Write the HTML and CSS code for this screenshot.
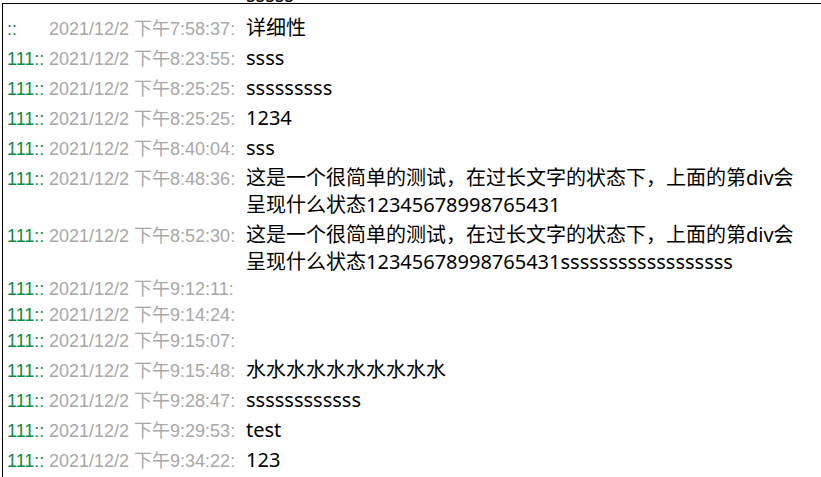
FILE: index.html
```html
<!DOCTYPE html>
<html>
<head>
<meta charset="utf-8">
<link rel="stylesheet" href="styles.css">
</head>
<body>
<div class="peek"><span class="peek-text">sssss</span></div>
<div class="log">
  <div class="row"><span class="name">::</span><span class="time">2021/12/2 下午7:58:37:</span><div class="msg">详细性</div></div>
  <div class="row"><span class="name">111::</span><span class="time">2021/12/2 下午8:23:55:</span><div class="msg">ssss</div></div>
  <div class="row"><span class="name">111::</span><span class="time">2021/12/2 下午8:25:25:</span><div class="msg">sssssssss</div></div>
  <div class="row"><span class="name">111::</span><span class="time">2021/12/2 下午8:25:25:</span><div class="msg">1234</div></div>
  <div class="row"><span class="name">111::</span><span class="time">2021/12/2 下午8:40:04:</span><div class="msg">sss</div></div>
  <div class="row"><span class="name">111::</span><span class="time">2021/12/2 下午8:48:36:</span><div class="msg">这是一个很简单的测试，在过长文字的状态下，上面的第div会呈现什么状态12345678998765431</div></div>
  <div class="row"><span class="name">111::</span><span class="time">2021/12/2 下午8:52:30:</span><div class="msg">这是一个很简单的测试，在过长文字的状态下，上面的第div会呈现什么状态12345678998765431ssssssssssssssssss</div></div>
  <div class="row"><span class="name">111::</span><span class="time">2021/12/2 下午9:12:11:</span><div class="msg"></div></div>
  <div class="row"><span class="name">111::</span><span class="time">2021/12/2 下午9:14:24:</span><div class="msg"></div></div>
  <div class="row"><span class="name">111::</span><span class="time">2021/12/2 下午9:15:07:</span><div class="msg"></div></div>
  <div class="row"><span class="name">111::</span><span class="time">2021/12/2 下午9:15:48:</span><div class="msg">水水水水水水水水水水</div></div>
  <div class="row"><span class="name">111::</span><span class="time">2021/12/2 下午9:28:47:</span><div class="msg">ssssssssssss</div></div>
  <div class="row"><span class="name">111::</span><span class="time">2021/12/2 下午9:29:53:</span><div class="msg">test</div></div>
  <div class="row"><span class="name">111::</span><span class="time">2021/12/2 下午9:34:22:</span><div class="msg">123</div></div>
</div>
</body>
</html>
```
FILE: styles.css
```css
html, body {
  margin: 0;
  padding: 0;
  background: #fff;
  overflow: hidden;
}
body {
  width: 821px;
  height: 477px;
  font-family: "Liberation Sans", "Noto Sans CJK SC", sans-serif;
}
.peek {
  height: 3px;
  overflow: hidden;
  display: flex;
  align-items: flex-end;
  padding-left: 246px;
}
.peek-text {
  font-family: "Noto Sans", "Noto Sans CJK SC", sans-serif;
  font-size: 20px;
  line-height: 16px;
  color: #000;
  display: block;
  flex: none;
}
.log {
  margin-left: 2px;
  border-left: 1px solid #000;
  border-top: 1px solid #000;
  padding: 10px 0 0 4px;
  height: 480px;
}
.row {
  display: flex;
  align-items: baseline;
  padding-bottom: 3px;
}
.name {
  flex: none;
  width: 42px;
  font-size: 18px;
  line-height: 23px;
  color: #0c8c46;
  white-space: nowrap;
}
.time {
  flex: none;
  width: 197px;
  font-size: 18px;
  line-height: 23px;
  color: #a8a8a8;
  white-space: nowrap;
}
.msg {
  width: 566px;
  font-family: "Noto Sans", "Noto Sans CJK SC", sans-serif;
  font-size: 20px;
  line-height: 27px;
  color: #000;
  word-break: break-all;
}
```
